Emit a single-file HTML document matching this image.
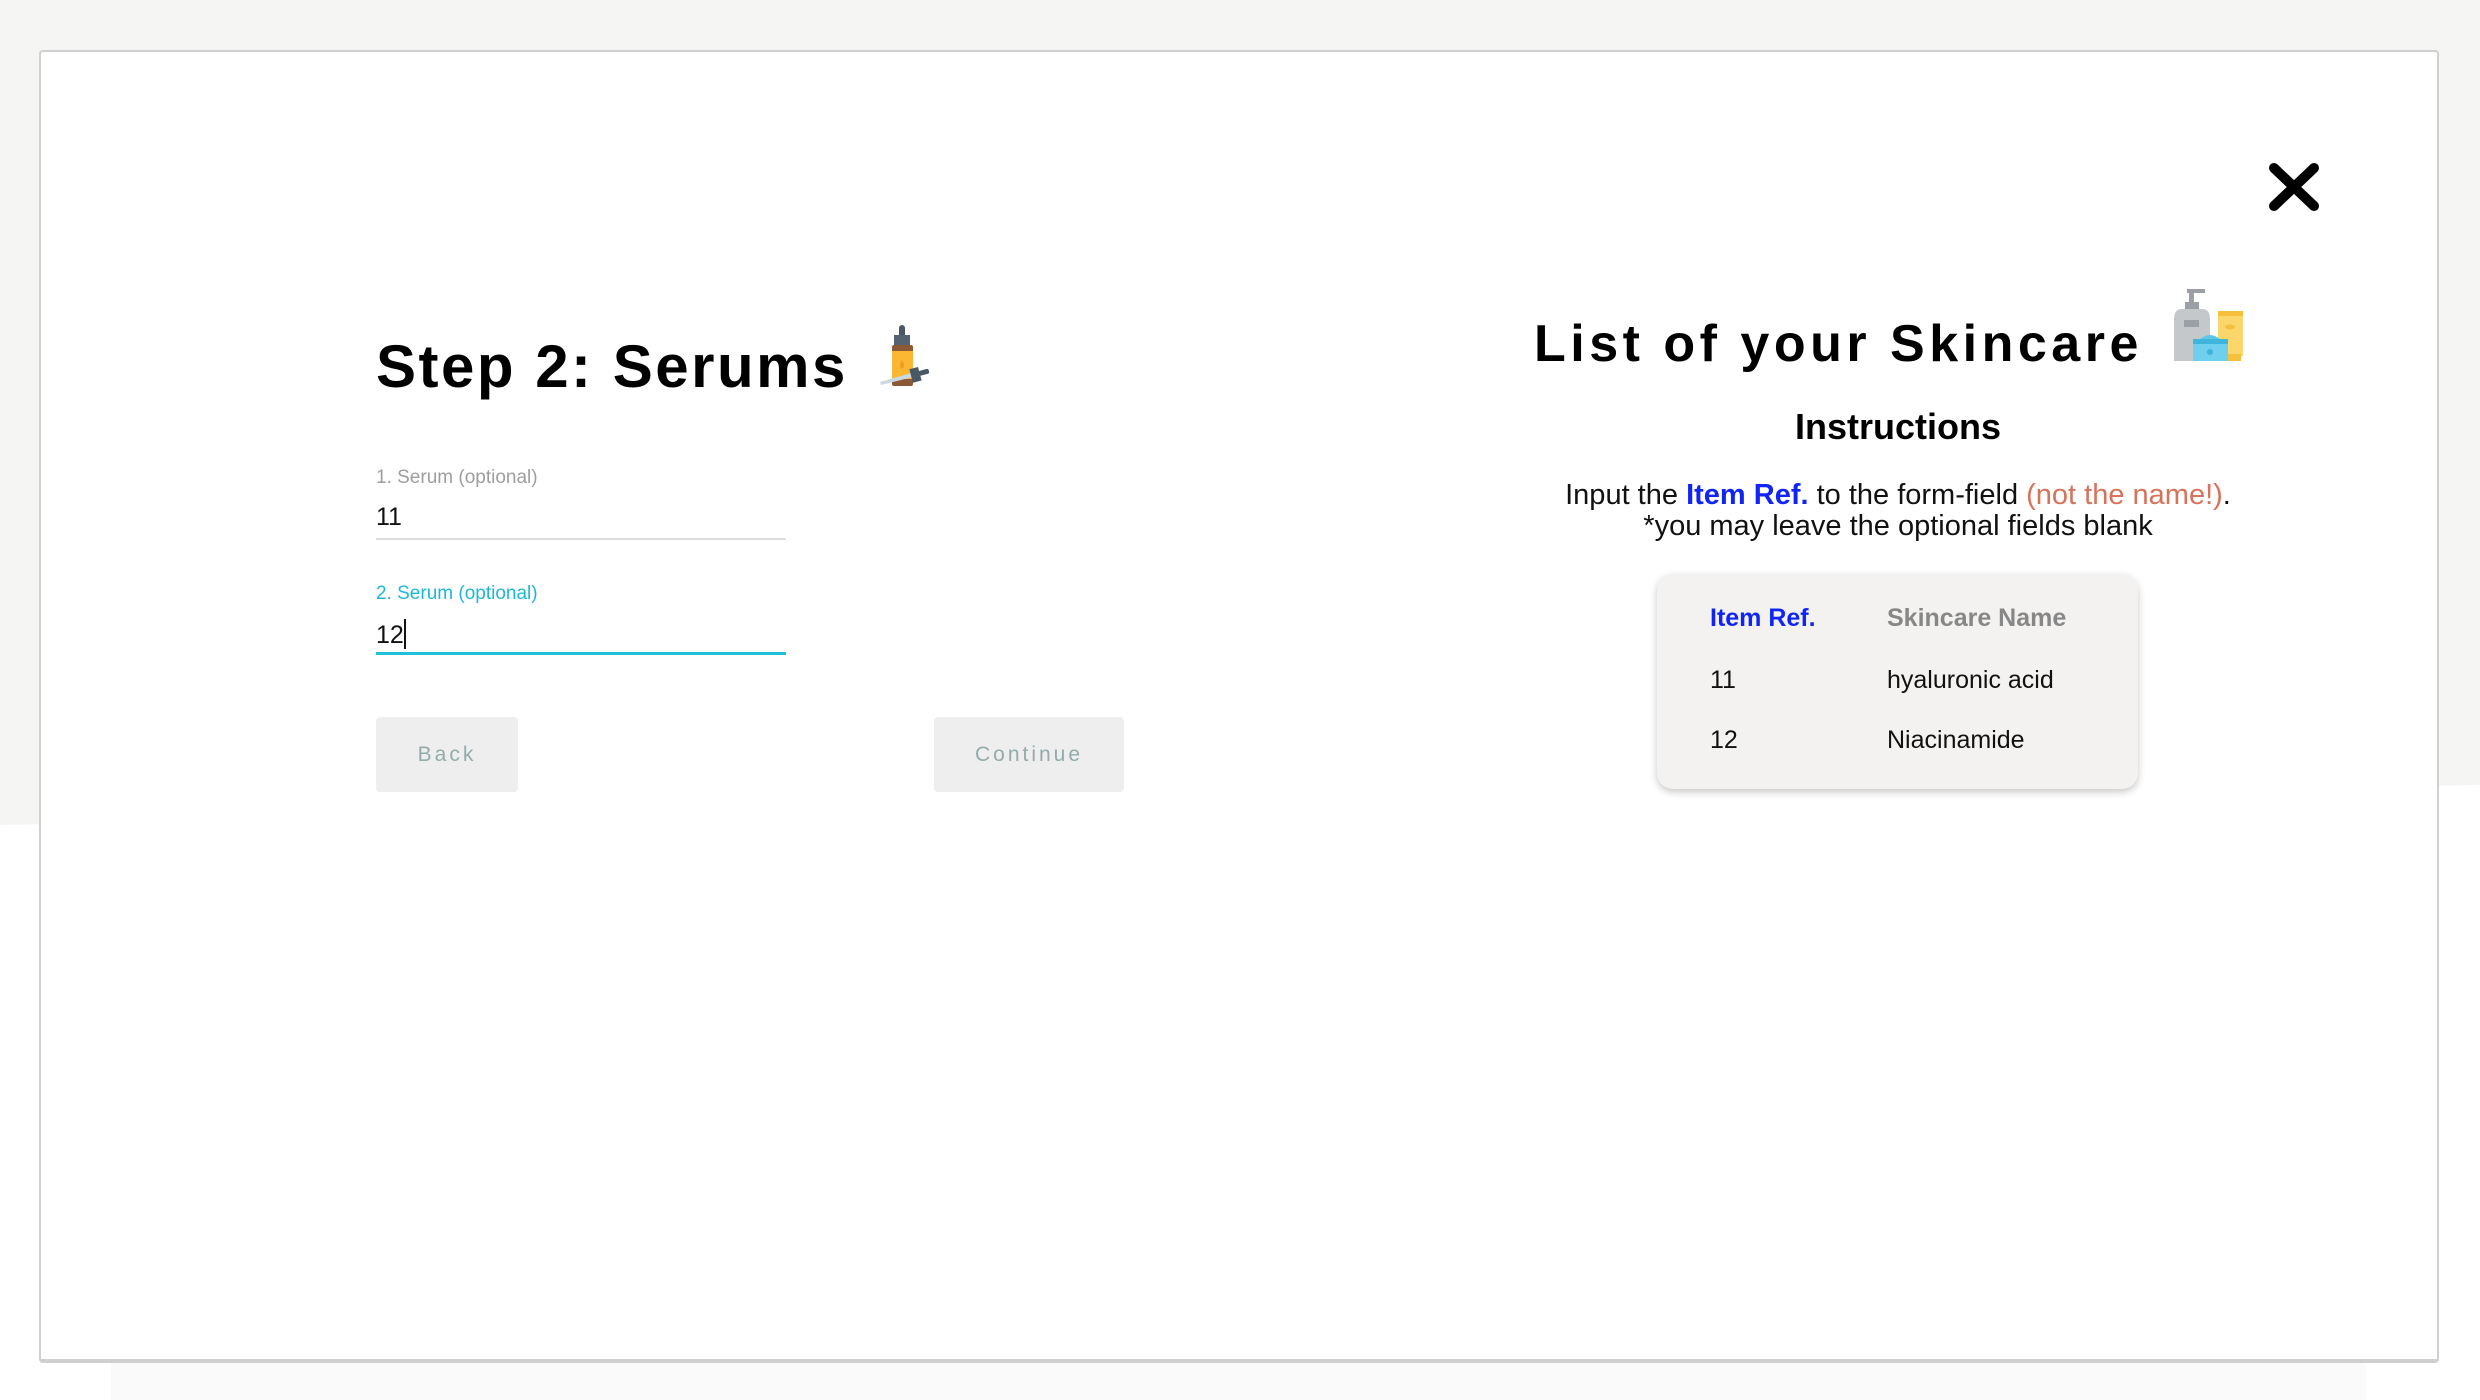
<!DOCTYPE html>
<html><head><meta charset="utf-8"><style>
html,body{margin:0;padding:0;}
body{width:2480px;height:1400px;position:relative;overflow:hidden;background:#fff;font-family:"Liberation Sans",sans-serif;}
.bgtop{position:absolute;left:0;top:0;width:2480px;height:1400px;background:#f5f5f3;clip-path:polygon(0 0,2480px 0,2480px 785px,0 825px);}
.strip{position:absolute;left:111px;top:1362px;width:2255px;height:38px;background:#fafafa;}
.modal{position:absolute;left:39px;top:50px;width:2396px;height:1307px;background:#fff;border:2px solid #d0d0d0;border-bottom:4px solid #cfcfcf;border-radius:4px;}
.abs{position:absolute;white-space:nowrap;}
.h1{font-weight:bold;font-size:60px;letter-spacing:2.5px;color:#000;}
.lbl{font-size:19px;color:#9e9e9e;}
.val{font-size:25px;color:#111;}
.btn{position:absolute;background:#eeeeee;border-radius:4px;color:#93abab;font-size:21px;letter-spacing:3px;display:flex;align-items:center;justify-content:center;}
.card{position:absolute;left:1657px;top:574px;width:481px;height:215px;background:#f3f2f1;border-radius:16px;box-shadow:0 3px 8px rgba(0,0,0,.22);}
.t{font-size:25px;color:#111;}
</style></head><body>
<div class="bgtop"></div>
<div class="strip"></div>
<div class="modal"></div>

<svg class="abs" style="left:2266px;top:160px" width="56" height="54" viewBox="0 0 56 54"><path d="M8 8 L48 46 M48 8 L8 46" stroke="#000" stroke-width="10" stroke-linecap="round"/></svg>

<div class="abs h1" style="left:376px;top:332px;">Step 2: Serums</div>
<svg class="abs" style="left:860px;top:310px" width="90" height="90" viewBox="0 0 90 90">
<rect x="39" y="15" width="6" height="13" rx="3" fill="#4a5866"/>
<rect x="34" y="25" width="16" height="10" fill="#55626f"/>
<rect x="32" y="35" width="21" height="41" rx="2" fill="#8a5a36"/>
<rect x="32" y="41" width="21" height="28" fill="#fbb731"/>
<path d="M42 50 q-4 6 0 9 q4 -3 0 -9z" fill="#f49a2a"/>
<path d="M20 72 L55 62 L57 66 L21 75z" fill="#c9d8e2"/>
<rect x="51" y="58" width="9" height="14" fill="#4a5866" transform="rotate(-15 55 65)"/>
<rect x="58" y="60" width="11" height="5" rx="2" fill="#4a5866" transform="rotate(-15 63 62)"/>
</svg>

<div class="abs lbl" style="left:376px;top:467px;">1. Serum (optional)</div>
<div class="abs val" style="left:376px;top:503px;">11</div>
<div class="abs" style="left:376px;top:538px;width:410px;height:2px;background:#dcdcdc;"></div>
<div class="abs lbl" style="left:376px;top:583px;color:#1eb8d6;">2. Serum (optional)</div>
<div class="abs val" style="left:376px;top:619px;">12<span style="display:inline-block;width:2px;height:30px;background:#111;vertical-align:-6px;"></span></div>
<div class="abs" style="left:376px;top:652px;width:410px;height:3px;background:#1ec0da;"></div>

<div class="btn" style="left:376px;top:717px;width:142px;height:75px;">Back</div>
<div class="btn" style="left:934px;top:717px;width:190px;height:75px;">Continue</div>

<div class="abs h1" style="left:1534px;top:314px;font-size:52px;letter-spacing:4.5px;">List of your Skincare</div>
<svg class="abs" style="left:2160px;top:275px" width="100" height="100" viewBox="0 0 100 100">
<rect x="27" y="14" width="18" height="4" fill="#9aa0a6"/>
<rect x="29" y="14" width="5" height="16" fill="#9aa0a6"/>
<rect x="25" y="27" width="14" height="7" fill="#9aa0a6"/>
<path d="M22 34 h20 q8 0 8 10 v42 h-36 v-42 q0 -10 8 -10z" fill="#c5c8cb"/>
<rect x="24" y="45" width="15" height="7" fill="#9aa0a6"/>
<rect x="58" y="36" width="25" height="45" fill="#fbd66a"/>
<rect x="58" y="36" width="25" height="5" fill="#f5c13c"/>
<rect x="60" y="79" width="21" height="7" fill="#f5c13c"/>
<ellipse cx="70" cy="52" rx="5" ry="2.5" fill="#f2c03e"/>
<path d="M38 66 q12 -12 24 0z" fill="#5bc8ea"/>
<rect x="33" y="64" width="35" height="22" fill="#6fd0ee"/>
<rect x="33" y="64" width="35" height="5" fill="#3fb4dc"/>
<circle cx="50" cy="77" r="3" fill="#3fb4dc"/>
</svg>

<div class="abs" style="left:1698px;top:406px;width:400px;text-align:center;font-weight:bold;font-size:36px;color:#000;">Instructions</div>
<div class="abs" style="left:1498px;top:480px;width:800px;text-align:center;font-size:29px;line-height:31px;color:#111;">Input the <span style="color:#1025f5;font-weight:bold;">Item Ref.</span> to the form-field <span style="color:#d9725a;">(not the name!)</span>.<br>*you may leave the optional fields blank</div>

<div class="card"></div>
<div class="abs t" style="left:1710px;top:604px;color:#1025f5;font-weight:bold;">Item Ref.</div>
<div class="abs t" style="left:1887px;top:604px;color:#878787;font-weight:bold;">Skincare Name</div>
<div class="abs t" style="left:1710px;top:666px;">11</div>
<div class="abs t" style="left:1887px;top:666px;">hyaluronic acid</div>
<div class="abs t" style="left:1710px;top:726px;">12</div>
<div class="abs t" style="left:1887px;top:726px;">Niacinamide</div>
</body></html>
